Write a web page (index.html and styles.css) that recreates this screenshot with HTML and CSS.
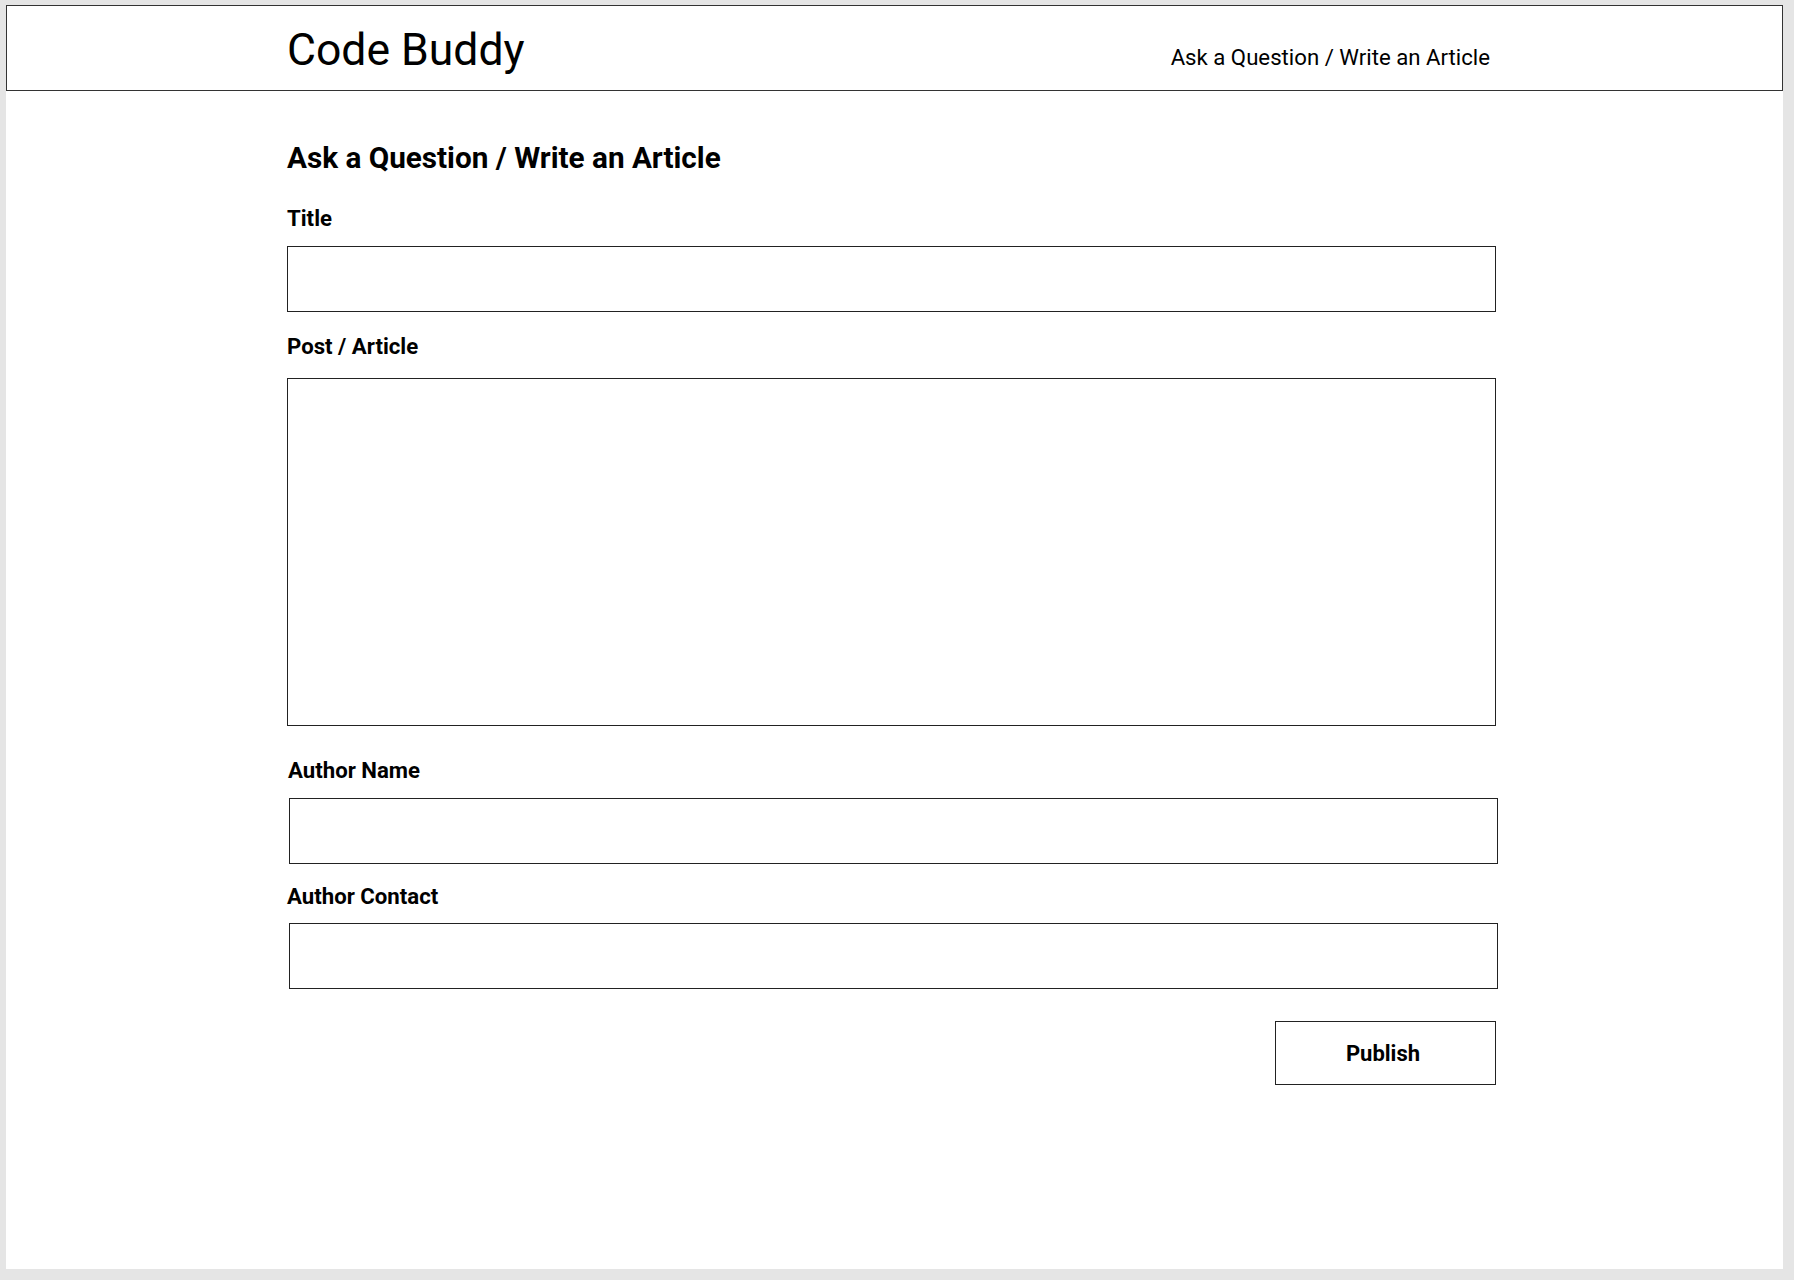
FILE: index.html
```html
<!DOCTYPE html>
<html lang="en">
<head>
<meta charset="utf-8">
<title>Code Buddy - Ask a Question / Write an Article</title>
<link rel="stylesheet" href="styles.css">
</head>
<body>
<div class="frame">
  <header class="header">
    <div class="header-inner">
      <div class="logo">Code Buddy</div>
      <nav class="nav">Ask a Question / Write an Article</nav>
    </div>
  </header>
  <main class="main">
    <h1 class="page-title">Ask a Question / Write an Article</h1>
    <form class="form">
      <label class="label label-title" for="title">Title</label>
      <input class="field" id="title" type="text">
      <label class="label label-post" for="post">Post / Article</label>
      <textarea class="field area" id="post"></textarea>
      <label class="label label-author shift" for="author">Author Name</label>
      <input class="field shift-field" id="author" type="text">
      <label class="label label-contact" for="contact">Author Contact</label>
      <input class="field shift-field" id="contact" type="text">
      <div class="actions">
        <button class="publish" type="button">Publish</button>
      </div>
    </form>
  </main>
</div>
</body>
</html>
```
FILE: styles.css
```css
html, body {
  margin: 0;
  padding: 0;
}
body {
  background: #e5e5e5;
  font-family: Roboto, "Liberation Sans", Arial, sans-serif;
  color: #000;
}
.frame {
  margin: 5px 11px 11px 6px;
  height: 1264px;
  background: #fff;
}
.header {
  height: 84px;
  border: 1px solid #333;
  box-sizing: content-box;
}
.header-inner {
  margin-left: 281px;
  width: 1209px;
  display: flex;
  justify-content: space-between;
  align-items: baseline;
  padding-top: 18px;
}
.logo {
  font-size: 44.5px;
  line-height: 52px;
  font-weight: 400;
  margin-left: -1px;
}
.nav {
  font-size: 22.2px;
  line-height: 26px;
  padding-right: 7px;
}
.main {
  margin-left: 281px;
  width: 1209px;
}
.page-title {
  margin: 0;
  padding-top: 49px;
  font-size: 29.7px;
  line-height: 36px;
  font-weight: 700;
}
.form {
  display: flex;
  flex-direction: column;
}
.label {
  display: block;
  font-size: 22.2px;
  line-height: 26px;
  font-weight: 700;
}
.label-title {
  margin-top: 29px;
  margin-bottom: 15px;
}
.label-post {
  margin-top: 21px;
  margin-bottom: 19px;
}
.label-author {
  margin-top: 31px;
  margin-bottom: 15px;
}
.label-contact {
  margin-top: 19px;
  margin-bottom: 14px;
}
.shift {
  margin-left: 1px;
}
.field {
  display: block;
  box-sizing: border-box;
  width: 1209px;
  height: 66px;
  margin: 0;
  border: 1px solid #222;
  border-radius: 0;
  background: #fff;
  font: inherit;
  padding: 0 12px;
  outline: none;
}
.shift-field {
  margin-left: 2px;
}
.area {
  height: 348px;
  resize: none;
  padding: 12px;
}
.actions {
  display: flex;
  justify-content: flex-end;
  margin-top: 32px;
}
.publish {
  width: 221px;
  height: 64px;
  box-sizing: border-box;
  border: 1px solid #222;
  border-radius: 0;
  background: #fff;
  font-family: inherit;
  font-size: 22px;
  font-weight: 700;
  color: #000;
  padding: 0 5px 0 0;
  margin-right: 0;
}
```
